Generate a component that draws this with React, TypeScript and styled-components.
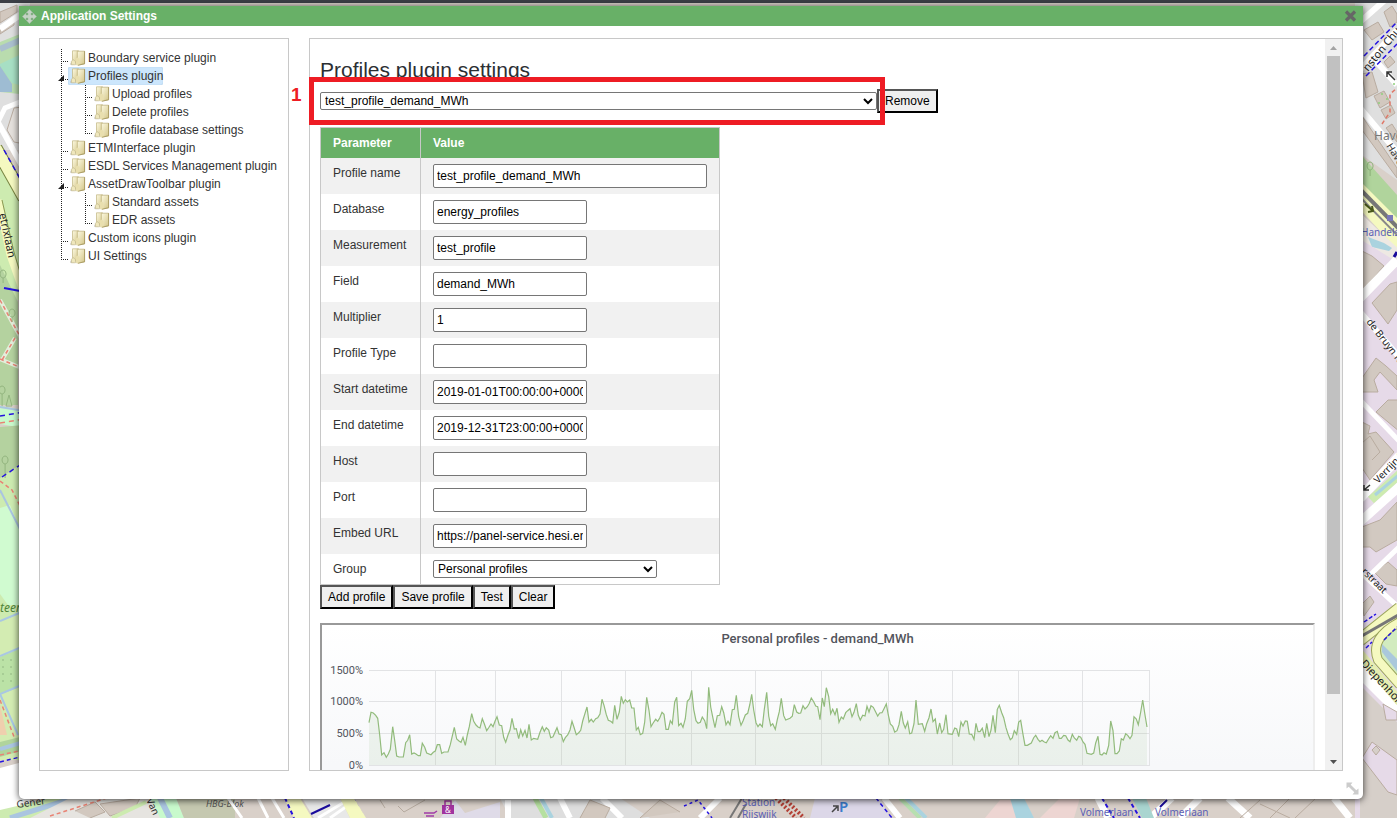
import React from 'react';
import styled, { createGlobalStyle } from 'styled-components';

const GREEN = '#68b067';
const LINE = '#c8c8c8';

const GlobalStyle = createGlobalStyle`
  * { box-sizing: border-box; }
  body { margin: 0; }
  body, button, input, select {
    font-family: "Liberation Sans", Arial, sans-serif;
    font-size: 12px;
  }
`;

const Page = styled.div`
  position: relative;
  display: flex;
  height: 100vh;
  padding: 6px 34px 19px 19px;
  overflow: hidden;
  color: #333;
`;

const MapCanvas = styled.svg`
  position: absolute;
  inset: 0;
  width: 100%;
  height: 100%;
`;

const Dialog = styled.section`
  position: relative;
  display: flex;
  flex-direction: column;
  flex: 1;
  min-width: 0;
  background: #fff;
  border-radius: 0 0 5px 5px;
  box-shadow: 0 1px 7px rgba(0, 0, 0, 0.75);
`;

const TitleBar = styled.header`
  display: flex;
  align-items: center;
  gap: 4px;
  height: 20px;
  padding: 0 6px 0 3px;
  background: ${GREEN};
`;

const Title = styled.h1`
  flex: 1;
  margin: 0;
  color: #fff;
  font-size: 12px;
  line-height: 20px;
`;

const CloseButton = styled.button`
  display: flex;
  padding: 0;
  border: 0;
  background: none;
`;

const DialogBody = styled.div`
  display: flex;
  flex: 1;
  gap: 20px;
  min-height: 0;
  padding: 12px 20px 28px;
`;

const ResizeHandle = styled.svg`
  position: absolute;
  right: 4px;
  bottom: 4px;
`;

const TreePanel = styled.nav`
  flex: 0 0 250px;
  padding: 10px 0 10px 18px;
  border: 1px solid ${LINE};
  overflow: hidden;
`;

const TreeList = styled.ul`
  margin: 0;
  padding: 0;
  list-style: none;
`;

const TreeRow = styled.li`
  display: flex;
  height: 18px;
`;

const TreeLink = styled.a<{ $selected?: boolean }>`
  display: flex;
  align-items: center;
  gap: 2px;
  padding-left: 2px;
  color: #333;
  line-height: 18px;
  white-space: nowrap;
  text-decoration: none;
  border-radius: 2px;
  background: ${(p) => (p.$selected ? '#cce6fc' : 'none')};
  box-shadow: ${(p) => (p.$selected ? 'inset 0 0 1px #8ab4d4' : 'none')};
`;

const SettingsPanel = styled.div`
  position: relative;
  display: flex;
  flex: 1;
  min-width: 0;
  border: 1px solid ${LINE};
`;

const SettingsScroll = styled.main`
  flex: 1;
  min-width: 0;
  padding: 18px 10px 10px;
  overflow-y: auto;
  scrollbar-width: none;
`;

const Heading = styled.h2`
  margin: 0;
  color: #2c2f33;
  font-size: 21px;
  font-weight: 400;
  line-height: 26px;
`;

const PickerRow = styled.div`
  display: flex;
  align-items: center;
  margin: 6px 0 14px;
`;

const Select = styled.select<{ $width: number }>`
  display: block;
  width: ${(p) => p.$width}px;
  height: 18px;
  padding: 0;
  border: 1px solid #767676;
  border-radius: 2px;
  background: #fff;
  color: #000;
`;

const Button = styled.button`
  height: 24px;
  padding: 0 6px;
  border: 2px solid #000;
  border-top-color: #555;
  border-left-color: #555;
  border-radius: 0;
  background: #efefef;
  color: #000;
  white-space: nowrap;
`;

const ParamTable = styled.table`
  width: 400px;
  border: 1px solid ${LINE};
  border-spacing: 0;
  line-height: 18px;

  th, td {
    padding: 6px 12px;
    text-align: left;
    vertical-align: top;
  }
  th:first-child {
    width: 100px;
    border-right: 1px solid ${LINE};
  }
  tbody th { font-weight: 400; }
  thead th {
    background: ${GREEN};
    color: #fff;
  }
  tbody tr:nth-child(odd) { background: #f1f1f1; }
`;

const TextInput = styled.input<{ $wide?: boolean }>`
  display: block;
  width: ${(p) => (p.$wide ? 274 : 154)}px;
  height: 24px;
  padding: 0 3px;
  border: 1px solid #767676;
  border-radius: 2px;
  background: #fff;
  color: #000;
`;

const ButtonRow = styled.div`
  display: flex;
`;

const ChartFrame = styled.figure`
  height: 200px;
  margin: 14px 0 0;
  overflow: hidden;
  border: 2px solid #999;
  border-right-color: #eee;
  border-bottom-color: #eee;
  background: linear-gradient(#fff, #f7f8fa 140px);
`;

const ChartTitle = styled.figcaption`
  padding-top: 4px;
  color: #52545c;
  font: 500 13px/20px Roboto, sans-serif;
  text-align: center;
`;

const ChartSvg = styled.svg`
  display: block;
  font: 11px Roboto, sans-serif;
`;

const ScrollBar = styled.div`
  display: flex;
  flex-direction: column;
  flex: 0 0 17px;
  background: #f1f1f1;
`;

const ScrollButton = styled.button`
  display: flex;
  align-items: center;
  justify-content: center;
  height: 17px;
  padding: 0;
  border: 0;
  background: none;
`;

const ScrollTrack = styled.div`
  flex: 1;
  padding: 0 2px;
`;

const ScrollThumb = styled.div`
  height: 91.5%;
  background: #c1c1c1;
`;

const Highlight = styled.div`
  position: absolute;
  top: 38px;
  left: -1px;
  width: 576px;
  height: 48px;
  border: 5px solid #ee1c24;
  pointer-events: none;
`;

const HighlightNumber = styled.span`
  position: absolute;
  top: 3px;
  left: -23px;
  color: #ee1c24;
  font-size: 19px;
  font-weight: 700;
  line-height: 20px;
`;

type Node = { label: string; level: 1 | 2; open?: boolean; last?: boolean; selected?: boolean };

const TREE: Node[] = [
  { label: 'Boundary service plugin', level: 1 },
  { label: 'Profiles plugin', level: 1, open: true, selected: true },
  { label: 'Upload profiles', level: 2 },
  { label: 'Delete profiles', level: 2 },
  { label: 'Profile database settings', level: 2, last: true },
  { label: 'ETMInterface plugin', level: 1 },
  { label: 'ESDL Services Management plugin', level: 1 },
  { label: 'AssetDrawToolbar plugin', level: 1, open: true },
  { label: 'Standard assets', level: 2 },
  { label: 'EDR assets', level: 2, last: true },
  { label: 'Custom icons plugin', level: 1 },
  { label: 'UI Settings', level: 1, last: true },
];

const FIELDS = [
  { id: 'name', label: 'Profile name', value: 'test_profile_demand_MWh', wide: true },
  { id: 'database', label: 'Database', value: 'energy_profiles' },
  { id: 'measurement', label: 'Measurement', value: 'test_profile' },
  { id: 'field', label: 'Field', value: 'demand_MWh' },
  { id: 'multiplier', label: 'Multiplier', value: '1' },
  { id: 'type', label: 'Profile Type', value: '' },
  { id: 'start', label: 'Start datetime', value: '2019-01-01T00:00:00+0000' },
  { id: 'end', label: 'End datetime', value: '2019-12-31T23:00:00+0000' },
  { id: 'host', label: 'Host', value: '' },
  { id: 'port', label: 'Port', value: '' },
  { id: 'embed', label: 'Embed URL', value: 'https://panel-service.hesi.energy/d-solo' },
];

// Series samples as "x,y" in thirds of a pixel, for the two halves of the year.
const FIRST_HALF =
  '177,308 183,277 190,279 197,286 203,295 209,345 215,405 222,398 229,412 235,402 241,388 248,320 254,362 260,408 267,411 280,411 287,368 293,361 299,344 305,402 312,399 318,402 325,407 331,407 337,370 344,382 350,399 363,404 370,397 376,393 382,374 389,374 395,400 402,396 414,396 421,374 433,322 440,357 447,363 453,367 459,352 466,376 472,345 478,320 485,281 491,304 498,315 504,321 510,324 517,296 523,311 530,332 537,322 543,312 549,320 555,304 561,290 568,315 575,317 581,352 587,367 594,345 600,330 606,295 613,327 619,326 626,356 632,329 638,348 645,331 651,354 657,313 664,360 671,355 683,358 690,337 697,320 703,334 709,323 716,330 722,353 729,350 741,323 747,342 754,344 760,365 766,353 773,345 780,330 786,304 792,322 799,344 806,338 812,331 818,303 825,280 831,261 837,306 844,298 850,306 857,296 863,293 870,282 876,238 882,256 889,284 895,301 902,304 908,309 914,256 921,298 928,276 934,229 940,250 946,239 952,246 959,240 965,264 972,264 979,330 985,322 991,344 998,340 1004,306 1010,232 1017,271 1023,320 1030,308 1037,298 1043,304 1049,294 1056,277 1062,283 1068,328 1075,328 1081,302 1087,311 1094,246 1100,232 1106,317 1113,310 1119,322 1126,296 1132,244 1139,236 1145,211 1151,268 1158,302 1164,310 1171,307 1177,291 1184,302 1190,326 1196,202 1202,261 1209,295 1215,323 1222,287 1229,286 1235,260 1241,278 1248,314 1254,304 1260,314 1267,269 1273,268 1279,226';
const SECOND_HALF =
  '26,290 33,316 39,303 46,285 53,280 59,255 65,223 71,270 78,308 84,320 90,312 97,320 103,268 110,217 116,288 122,317 128,311 136,328 142,299 148,275 154,235 161,287 167,300 180,295 187,289 193,254 200,276 206,280 212,279 219,257 225,267 232,260 238,250 244,234 251,245 257,258 263,260 270,299 277,234 283,260 289,203 296,230 302,281 308,268 315,284 321,265 327,307 334,291 340,297 347,278 353,272 360,266 366,290 372,277 379,251 385,286 391,300 398,286 405,288 411,259 417,276 423,257 430,262 436,274 443,288 449,279 456,278 462,266 469,252 475,285 481,312 488,319 494,336 501,332 507,314 514,274 520,309 526,324 533,305 539,341 545,339 552,311 558,240 565,313 577,311 584,334 590,311 597,293 603,267 609,305 616,297 622,342 629,309 635,338 641,328 648,284 654,341 667,343 674,324 680,327 686,350 693,306 699,318 706,303 712,304 718,342 725,343 732,358 738,310 744,335 750,335 757,325 764,353 770,310 777,350 783,330 789,286 796,338 802,268 808,256 815,278 821,293 828,323 834,342 841,359 847,354 853,332 860,343 866,306 872,301 879,343 885,376 892,376 904,369 911,353 917,346 924,358 930,365 936,361 943,366 949,368 956,356 962,347 969,355 975,338 982,334 988,355 994,355 1001,346 1007,347 1014,360 1020,365 1027,343 1033,354 1040,361 1046,349 1052,352 1059,366 1065,373 1071,400 1084,403 1091,399 1097,369 1104,349 1110,403 1116,405 1122,398 1129,402 1136,376 1142,303 1149,332 1155,401 1161,401 1168,393 1174,356 1180,360 1187,341 1193,346 1200,356 1206,346 1212,290 1219,297 1225,314 1232,276 1238,240 1245,285 1251,321';

const toPoints = (samples: string, shift: number) =>
  samples.split(' ').map((pair) => {
    const [x, y] = pair.split(',').map(Number);
    return `${((x + shift) / 3 - 12).toFixed(1)},${(y / 3 - 29).toFixed(1)}`;
  });

const SERIES = [...toPoints(FIRST_HALF, 0), ...toPoints(SECOND_HALF, 1260)].join(' ');
const MONTHS = [113, 173, 239, 303, 369, 433, 499, 566, 630, 696, 760, 827];
const LEVELS = [
  { y: 21, label: '1500%' },
  { y: 52, label: '1000%' },
  { y: 84, label: '500%' },
  { y: 116, label: '0%' },
];

function Chart() {
  return (
    <ChartFrame>
      <ChartTitle>Personal profiles - demand_MWh</ChartTitle>
      <ChartSvg width="850" height="160" viewBox="0 0 850 160" role="img" aria-label="Demand over the year">
        {LEVELS.map((l) => (
          <g key={l.label}>
            <path d={`M47 ${l.y + 0.5}H828`} stroke="#e2e3e5" />
            <text x="41" y={l.y + 4} textAnchor="end" fill="#52545c">{l.label}</text>
          </g>
        ))}
        {MONTHS.map((x) => <path key={x} d={`M${x + 0.5} 21V117`} stroke="#e2e3e5" />)}
        <polygon points={`47,116 ${SERIES} 825,116`} fill="#7eb26d" fillOpacity="0.1" />
        <polyline points={SERIES} fill="none" stroke="#92bb7c" strokeWidth="1.2" />
      </ChartSvg>
    </ChartFrame>
  );
}

function Guide({ node }: { node: Node }) {
  const nested = node.level === 2;
  const own = nested ? 27 : 3;
  return (
    <svg width={nested ? 34 : 10} height="18" shapeRendering="crispEdges" aria-hidden="true">
      <g stroke="#222" strokeDasharray="1 1" fill="none">
        {nested && <path d="M3.5 0V18" />}
        <path d={`M${own + 0.5} 0V${node.last ? 13 : 18}`} />
        <path d={`M${own + 2} 12.5H${own + 7}`} />
      </g>
      {node.open && <path d="M0 14H6V8Z" fill="#222" shapeRendering="auto" />}
    </svg>
  );
}

function FolderIcon() {
  return (
    <svg width="16" height="16" viewBox="0 0 16 16" aria-hidden="true">
      <defs>
        <linearGradient id="folder" x1="0" y1="0" x2="1" y2="1">
          <stop offset="0" stopColor="#fdfae2" />
          <stop offset="1" stopColor="#d3c588" />
        </linearGradient>
      </defs>
      <path d="M0 14.500L2 11L4 14.500Z" fill="#b5b5b5" />
      <path d="M2.500 0.800H8.500V13H2.500Z" fill="url(#folder)" stroke="#c0b47f" strokeWidth="0.700" />
      <path d="M1.300 14.800V11.500L3 9.500L5.500 11.500V14.800Z" fill="#efe7bd" stroke="#b5aa7c" strokeWidth="0.500" />
      <path d="M7.300 1.200H14.500V13.800L7.300 15Z" fill="url(#folder)" stroke="#b9ac74" strokeWidth="0.700" />
      <path d="M6 8.500L7.500 7.500L9.500 9V15L6 15.300Z" fill="#e9dfae" />
      <path d="M14.600 1.200V13.800L8 15.300" fill="none" stroke="#a5955a" strokeWidth="0.800" />
    </svg>
  );
}

function StreetMap() {
  return (
    <MapCanvas viewBox="0 0 1397 818" preserveAspectRatio="xMidYMid slice" aria-hidden="true" fontFamily="Noto Sans, sans-serif">
      <rect width="1397" height="818" fill="#d9d0c9" />
      {/* park side, west */}
      <path d="M0 0H30V150H0Z" fill="#dfdfdf" />
      <path d="M0 12L17 5V12L0 23ZM0 27L14 20V25L0 34Z" fill="#d2c8bf" stroke="#b9aca0" />
      <path d="M0 29L30 8" stroke="#fff" strokeWidth="6" />
      <path d="M0 42L30 30V95L0 92Z" fill="#b9dcae" />
      <path d="M0 49L30 36" stroke="#aabfce" strokeWidth="6" />
      <path d="M0 64L30 50V88L12 83L0 66Z" fill="#a7dfc4" />
      <path d="M0 66L12 84V92H0Z" fill="#9ebcd3" />
      <path d="M-2 122L5 108L30 98" stroke="#fff" strokeWidth="5" fill="none" />
      <path d="M7 130L14 108L30 106V145L14 142Z" fill="#e4e0dc" stroke="#b9aca0" />
      <path d="M0 132L22 172V160L0 120Z" fill="#fff" />
      <path d="M0 146L24 190V300H0Z" fill="#cdebb0" />
      <path d="M-4 148L24 198" stroke="#76823f" strokeWidth="13" />
      <path d="M-4 148L24 198" stroke="#f5f9c0" strokeWidth="11" />
      <path d="M4 150L24 186M0 225L14 270L24 300" stroke="#2412e0" strokeWidth="1.500" strokeDasharray="5 4" fill="none" />
      <path d="M-2 200L10 255L26 300" stroke="#f5f9c0" strokeWidth="7" fill="none" />
      <path d="M2 200L14 252L27 296" stroke="#8d9850" fill="none" />
      <text x="-1" y="214" fontSize="11" transform="rotate(78 -1 214)" fill="#222">etrixlaan</text>
      <path d="M0 265L18 302V405H0Z" fill="#b4d29f" />
      <path d="M0 300L22 340M15 338L2 360M0 359L24 369" stroke="#e3eedb" strokeWidth="4" fill="none" />
      <path d="M0 300L22 340M15 338L2 360M0 359L24 369" stroke="#e98374" strokeWidth="1.500" strokeDasharray="4 3" fill="none" />
      <path d="M4 288L20 291" stroke="#2412e0" strokeWidth="2" />
      <path
        d="M2 386a3 4 0 1 1 .1 0V404M6 398L9 387L12 398ZM5 456a3 4 0 1 1 .1 0V470M3 270a3 4 0 1 1 .1 0V275M12 309a3 4 0 1 1 .1 0V314"
        transform="translate(0 8)"
        stroke="#93b57f"
        fill="none"
      />
      <path d="M0 406L24 410V428L0 424Z" fill="#c8facc" />
      <path d="M0 407L24 411" stroke="#aac5e0" strokeWidth="2" />
      <path d="M0 416L24 412" stroke="#2412e0" strokeWidth="1.500" strokeDasharray="5 4" />
      <path d="M0 423L24 419" stroke="#e98374" strokeWidth="1.500" strokeDasharray="5 4" />
      <path d="M0 478L24 462V640H0Z" fill="#cdebb0" />
      <path d="M0 427L24 425V462L0 478Z" fill="#b4d29f" />
      <path d="M5 456a3 4 0 1 1 .1 0V470" transform="translate(0 8)" stroke="#93b57f" fill="none" />
      <path d="M2 477L20 465" stroke="#2412e0" strokeWidth="1.500" strokeDasharray="5 4" />
      <path d="M0 481L12 490L22 510" stroke="#e98374" strokeWidth="1.500" strokeDasharray="4 3" fill="none" />
      <path d="M0 508L10 505L24 540V605H8L0 594Z" fill="#d0fbd0" />
      <path d="M0 490L24 537" stroke="#aac5e0" strokeWidth="2" />
      <text x="0" y="612" fontSize="12" fontStyle="italic" fill="#4f8439">teer</text>
      <path d="M0 621L24 612V760H0Z" fill="#d3ecb2" />
      <path d="M0 657L24 647V686L0 694Z" fill="#bbe2a6" />
      <g fill="#86a878">
        {[660, 667, 674, 681].map((y) => [3, 11].map((x) => <circle key={`${x}-${y}`} cx={x} cy={y} r="0.700" />))}
      </g>
      <path d="M0 621L24 611M0 656L24 646M0 694L24 684M0 694L18 735" stroke="#a9c7e3" strokeWidth="2" />
      <path d="M0 705L7 735H0Z" fill="#efcfae" />
      <path d="M0 700L16 742" stroke="#e98374" strokeWidth="1.500" strokeDasharray="4 3" />
      <path d="M0 742L24 736V750L0 757Z" fill="#b0d49c" />
      <path d="M0 749L24 742" stroke="#aac5e0" strokeWidth="4" />
      <path d="M0 755L24 750" stroke="#e98374" strokeWidth="1.500" strokeDasharray="4 3" />
      <path d="M0 762L24 756" stroke="#2412e0" strokeWidth="1.500" strokeDasharray="4 3" />

      {/* southern edge */}
      <path d="M0 768L30 760V818H0Z" fill="#fff" />
      <path d="M0 810L60 796H90L30 818H0Z" fill="#cdebb0" />
      <path d="M10 818L80 796" stroke="#aac5e0" strokeWidth="5" />
      <path d="M30 818L70 798H180V818Z" fill="#e6e4e0" />
      <path d="M75 811L95 802L105 812L90 818M100 804L140 798L135 808L110 816Z" fill="#d2c8bf" stroke="#b9aca0" />
      <path d="M50 816L110 797" stroke="#e98374" strokeWidth="1.500" strokeDasharray="4 3" />
      <path d="M112 818L146 802" stroke="#cdebb0" strokeWidth="4" />
      <text x="17" y="808" fontSize="10" transform="rotate(-8 17 808)" fill="#333">Gener</text>
      <path d="M150 798H176L184 818H160Z" fill="#c8facc" />
      <path d="M160 798L170 818" stroke="#aac5e0" strokeWidth="6" />
      <text x="146" y="800" fontSize="10" transform="rotate(65 146 800)" fill="#333">Van</text>
      <path d="M176 798H235V818H184Z" fill="#c5c8b0" />
      <text x="206" y="807" fontSize="9" fontStyle="italic" fill="#555">HBG-Blok</text>
      <path d="M228 798L242 818M258 798L268 818M272 798L284 818" stroke="#fff" strokeWidth="3" />
      <path d="M284 798H300L312 818H294Z" fill="#f5f9c0" />
      <path d="M285 798L294 818M353 798L364 818" stroke="#2412e0" strokeWidth="2" strokeDasharray="4 3" />
      <path d="M302 798H340L350 818H314Z" fill="#e8e8e8" />
      <path d="M318 818L346 801M330 818L350 804" stroke="#fff" strokeWidth="3" />
      <path d="M311 814L330 805" stroke="#1a0b9c" strokeWidth="2" />
      <path d="M340 798H354L366 818H350Z" fill="#f5f9c0" />
      <path d="M398 806L404 812L425 800M380 800L385 808" stroke="#b5aa9f" fill="none" />
      <path d="M455 800L465 813L500 802V818H440Z" fill="#dfdbe8" />
      <path d="M424 813H434L437 811M426 816H434" stroke="#a03ba8" strokeWidth="1.500" fill="none" />
      <path d="M442 805H454V814H442Z" fill="#a1339f" />
      <path d="M445 805V801H451V805" fill="none" stroke="#a1339f" strokeWidth="1.500" />
      <text x="445" y="813" fontSize="8" fill="#fff">&amp;</text>
      <path d="M500 798H620L650 818H510Z" fill="#dedede" />
      <path d="M508 818V800M560 798L570 818M602 798L622 818M720 798L700 818" stroke="#fff" strokeWidth="6" />
      <path d="M535 798L546 818" stroke="#b6e0a0" strokeWidth="5" />
      <path d="M541 798L552 818" stroke="#aad3df" strokeWidth="4" />
      <path d="M580 818L590 800L610 808L605 818M640 818L660 800L680 812" fill="#d2c8bf" stroke="#b9aca0" />
      <path d="M684 806L698 800L712 818" stroke="#2412e0" strokeWidth="1.500" strokeDasharray="3 3" fill="none" />
      <path d="M730 818L742 798M738 818L746 804" stroke="#777" strokeWidth="2" />
      <path d="M776 798L796 818M784 798L804 818" stroke="#b33f35" strokeWidth="4" strokeDasharray="2 2" />
      <text x="742" y="806" fontSize="10" fill="#5b5fb5">Station</text>
      <text x="742" y="818" fontSize="10" fill="#5b5fb5">Rijswijk</text>
      <path d="M815 798H880L890 818H810Z" fill="#dcd7e8" />
      <path d="M832 812L837 807M833 806H838V811" stroke="#444" strokeWidth="1.500" fill="none" />
      <text x="839" y="812" fontSize="15" fontWeight="600" fill="#3b7ccc">P</text>
      <path d="M876 798L892 818" stroke="#2412e0" strokeWidth="1.500" strokeDasharray="4 3" />
      <path d="M884 798L900 818" stroke="#fff" strokeWidth="6" />
      <path d="M900 798L920 818" stroke="#b7dfb0" strokeWidth="4" />
      <path d="M906 798L926 818" stroke="#aad3df" strokeWidth="4" />
      <path d="M985 818L1000 800H1022L1034 818Z" fill="#edd5d2" />
      <path d="M1010 798H1024L1034 818H1016Z" fill="#aad3df" />
      <path d="M1060 798H1080L1074 818H1040Z" fill="#edd5d2" />
      <path d="M1098 798L1108 818M1150 818L1172 798M1180 818L1200 798M1228 798L1250 818M1334 798L1350 818" stroke="#fff" strokeWidth="7" />
      <path d="M1102 798L1114 818M1128 798L1140 818" stroke="#2412e0" strokeWidth="2" strokeDasharray="4 3" />
      <path d="M1132 798H1146L1154 818H1142Z" fill="#a9d5d0" />
      <path d="M1160 807L1167 800" stroke="#1a0b9c" strokeWidth="2" />
      <path d="M1240 818L1260 800M1270 818L1290 798M1295 818L1316 798M1260 804L1290 818" stroke="#b9aca0" fill="none" />
      <text x="1080" y="816" fontSize="10" fill="#5b5fb5">Volmerlaan</text>
      <text x="1155" y="816" fontSize="10" fill="#5b5fb5">Volmerlaan</text>

      {/* industrial side, east */}
      <path d="M1355 0H1397V180L1355 150Z" fill="#dfdfdf" />
      <path d="M1384 12L1392 6L1397 14V22L1390 27ZM1364 30L1378 22L1384 32L1372 40ZM1362 74L1372 72L1378 92L1366 98ZM1374 96L1384 91L1390 102L1380 108ZM1381 110L1391 105L1395 113L1386 119ZM1384 62L1390 56L1395 62L1388 68ZM1362 116L1397 168V178L1362 130ZM1386 128L1392 124L1397 132V142Z" fill="#d2c8bf" stroke="#b9aca0" />
      <path d="M1360 22L1385 0M1375 60L1397 85M1360 108L1397 152M1360 70L1397 30" stroke="#fff" strokeWidth="6" />
      <path d="M1364 56L1397 22M1366 76L1397 44" stroke="#2412e0" strokeWidth="1.500" strokeDasharray="5 3" />
      <text x="1368" y="72" fontSize="11" transform="rotate(-51 1368 72)" fill="#222">nston Church</text>
      <path d="M1395 80L1387 72M1387 77V72H1392" stroke="#333" strokeWidth="1.500" fill="none" />
      <path d="M1382 124L1390 112V94L1397 88" stroke="#e07868" strokeWidth="1.500" strokeDasharray="4 3" fill="none" />
      <g fill="#8fd07c"><circle cx="1382" cy="94" r="1" /><circle cx="1387" cy="99" r="1" /><circle cx="1379" cy="103" r="1" /><circle cx="1394" cy="84" r="1" /></g>
      <text x="1374" y="140" fontSize="12" fill="#777">Have</text>
      <text x="1386" y="146" fontSize="10" transform="rotate(58 1386 146)" fill="#333">Have</text>
      <path d="M1355 148L1397 195V222L1355 178Z" fill="#b0d49c" />
      <path d="M1370 170a3 4 0 1 1 .1 0V176" stroke="#8eb37a" fill="none" />
      <path d="M1355 176L1405 226V258L1355 204Z" fill="#f5f9c0" />
      <path d="M1355 184L1405 235" stroke="#777" strokeWidth="4" />
      <path d="M1355 192L1405 243" stroke="#888" strokeWidth="2" />
      <path d="M1365 204L1373 211M1368 212L1373 211L1372 206" stroke="#48581a" strokeWidth="2" fill="none" />
      <path d="M1355 208L1405 255V300L1355 300Z" fill="#eee9e3" />
      <path d="M1368 237L1384 243L1392 248L1389 251L1372 247Z" fill="#aad3df" />
      <rect x="1387" y="215" width="6" height="6" fill="#7a78b8" />
      <text x="1361" y="236" fontSize="10" fill="#5b5fb5">Handels</text>
      <path d="M1355 236L1397 262V818H1355Z" fill="#e6dae8" />
      <path d="M1360 250L1372 256L1384 266L1363 290H1360ZM1372 303L1390 284L1397 282V310L1388 324ZM1362 378L1376 358L1386 366L1397 376V390L1380 372L1374 380L1378 392H1362Z" fill="#d2c9c1" stroke="#b9aca0" />
      <path d="M1360 298L1397 260" stroke="#fff" strokeWidth="9" />
      <path d="M1360 312L1400 358" stroke="#fff" strokeWidth="6" />
      <text x="1366" y="322" fontSize="10" transform="rotate(52 1366 322)" fill="#222">de Bruyn Ko</text>
      <path d="M1394 257L1397 252" stroke="#1a0b9c" strokeWidth="3" />
      <path d="M1376 412L1388 400H1400V432ZM1362 422L1370 426L1368 434L1376 432L1394 452L1370 480L1362 468ZM1362 527L1380 520L1397 502V540L1376 552L1370 547H1362ZM1374 572L1388 562L1397 570V586L1386 584ZM1362 604L1370 596L1374 602L1364 616Z" fill="#d2c9c1" stroke="#b9aca0" />
      <path d="M1362 443L1370 436L1380 452L1372 460" stroke="#b9aca0" fill="none" />
      <path d="M1360 400L1400 442" stroke="#fff" strokeWidth="5" />
      <path d="M1360 498L1400 456" stroke="#fff" strokeWidth="10" />
      <path d="M1371 500L1400 474" stroke="#cdebb0" strokeWidth="9" />
      <path d="M1375 495L1400 474" stroke="#aad3df" strokeWidth="3" />
      <path d="M1360 522L1400 486" stroke="#fff" strokeWidth="9" />
      <path d="M1364 490L1370 485M1364 485V490H1369" stroke="#333" strokeWidth="1.500" fill="none" />
      <text x="1378" y="484" fontSize="10" transform="rotate(-46 1378 484)" fill="#222">Verrijn S</text>
      <path d="M1370 575L1400 546M1360 572L1397 606" stroke="#fff" strokeWidth="5" />
      <text x="1361" y="572" fontSize="10" transform="rotate(45 1361 572)" fill="#222">rstraat</text>
      <path d="M1360 640L1400 608" stroke="#9aa35a" strokeWidth="13" />
      <path d="M1360 640L1400 608" stroke="#f5f9c0" strokeWidth="11" />
      <path d="M1360 637L1400 614" stroke="#777" strokeWidth="3" />
      <path d="M1378 642L1392 622H1400V690L1384 668Z" fill="#d2ebbf" />
      <path d="M1382 644L1400 662V675L1382 652Z" fill="#aac8dc" />
      <path d="M1400 622C1380 632 1372 645 1378 660L1400 685" stroke="#9aa35a" strokeWidth="10" fill="none" />
      <path d="M1400 622C1380 632 1372 645 1378 660L1400 685" stroke="#f5f9c0" strokeWidth="8" fill="none" />
      <path d="M1364 622L1376 614M1366 648L1372 642M1384 640L1397 627" stroke="#2412e0" strokeWidth="1.500" strokeDasharray="4 2" />
      <path d="M1360 655L1400 700V720L1360 680Z" fill="#fff" />
      <path d="M1360 654L1400 702" stroke="#e6eeb0" strokeWidth="9" />
      <text x="1360" y="664" fontSize="11" transform="rotate(47 1360 664)" fill="#222">Diepenhors</text>
      <path d="M1360 685L1397 722V818H1360Z" fill="#d6cfc9" />
      <path d="M1362 758L1372 742L1397 760V795L1388 792ZM1383 704L1397 712V720H1386Z" fill="#e6dae8" stroke="#b9aca0" />
      <path d="M1376 746L1380 750L1376 755L1372 750Z" fill="#d6cfc9" stroke="#b9aca0" />
      <rect width="1397" height="3" fill="#3b3e45" />
    </MapCanvas>
  );
}

export default function App() {
  return (
    <>
      <GlobalStyle />
      <Page>
        <StreetMap />
        <Dialog aria-label="Application Settings">
          <TitleBar>
            <svg width="15" height="15" viewBox="0 0 15 15" fill="#c4d3c4" stroke="#a3b3a3" strokeWidth="0.500" aria-hidden="true">
              <path d="M7.500 0.300L11 4H9V6H11V4L14.700 7.500L11 11V9H9V11H11L7.500 14.700L4 11H6V9H4V11L0.300 7.500L4 4V6H6V4H4Z" />
            </svg>
            <Title>Application Settings</Title>
            <CloseButton type="button" aria-label="Close">
              <svg width="13" height="12" viewBox="0 0 13 12" stroke="#666" strokeWidth="3.200">
                <path d="M2 1.500L11 10.500M11 1.500L2 10.500" />
              </svg>
            </CloseButton>
          </TitleBar>
          <DialogBody>
            <TreePanel aria-label="Settings sections">
              <TreeList>
                {TREE.map((node) => (
                  <TreeRow key={node.label}>
                    <Guide node={node} />
                    <TreeLink href="#" $selected={node.selected}>
                      <FolderIcon />
                      {node.label}
                    </TreeLink>
                  </TreeRow>
                ))}
              </TreeList>
            </TreePanel>
            <SettingsPanel>
              <SettingsScroll>
                <Heading>Profiles plugin settings</Heading>
                <PickerRow>
                  <Select $width={557} aria-label="Profile" defaultValue="p">
                    <option value="p">test_profile_demand_MWh</option>
                  </Select>
                  <Button type="button">Remove</Button>
                </PickerRow>
                <ParamTable>
                  <thead>
                    <tr><th scope="col">Parameter</th><th scope="col">Value</th></tr>
                  </thead>
                  <tbody>
                    {FIELDS.map((f) => (
                      <tr key={f.id}>
                        <th scope="row"><label htmlFor={f.id}>{f.label}</label></th>
                        <td><TextInput id={f.id} type="text" defaultValue={f.value} $wide={f.wide} /></td>
                      </tr>
                    ))}
                    <tr>
                      <th scope="row"><label htmlFor="group">Group</label></th>
                      <td>
                        <Select id="group" $width={224} defaultValue="personal">
                          <option value="personal">Personal profiles</option>
                        </Select>
                      </td>
                    </tr>
                  </tbody>
                </ParamTable>
                <ButtonRow>
                  <Button type="button">Add profile</Button>
                  <Button type="button">Save profile</Button>
                  <Button type="button">Test</Button>
                  <Button type="button">Clear</Button>
                </ButtonRow>
                <Chart />
              </SettingsScroll>
              <ScrollBar>
                <ScrollButton type="button" aria-label="Scroll up">
                  <svg width="7" height="4" viewBox="0 0 7 4"><path d="M0 4L3.500 0L7 4Z" fill="#a3a3a3" /></svg>
                </ScrollButton>
                <ScrollTrack><ScrollThumb /></ScrollTrack>
                <ScrollButton type="button" aria-label="Scroll down">
                  <svg width="7" height="4" viewBox="0 0 7 4"><path d="M0 0L3.500 4L7 0Z" fill="#505050" /></svg>
                </ScrollButton>
              </ScrollBar>
              <Highlight><HighlightNumber>1</HighlightNumber></Highlight>
            </SettingsPanel>
          </DialogBody>
          <ResizeHandle width="13" height="13" viewBox="0 0 13 13" aria-hidden="true">
            <path d="M0.500 0.500H6.500L4.700 2.700L10.300 8.300L12.500 6.500V12.500H6.500L8.300 10.300L2.700 4.700L0.500 6.500Z" fill="#ccc" />
          </ResizeHandle>
        </Dialog>
      </Page>
    </>
  );
}
